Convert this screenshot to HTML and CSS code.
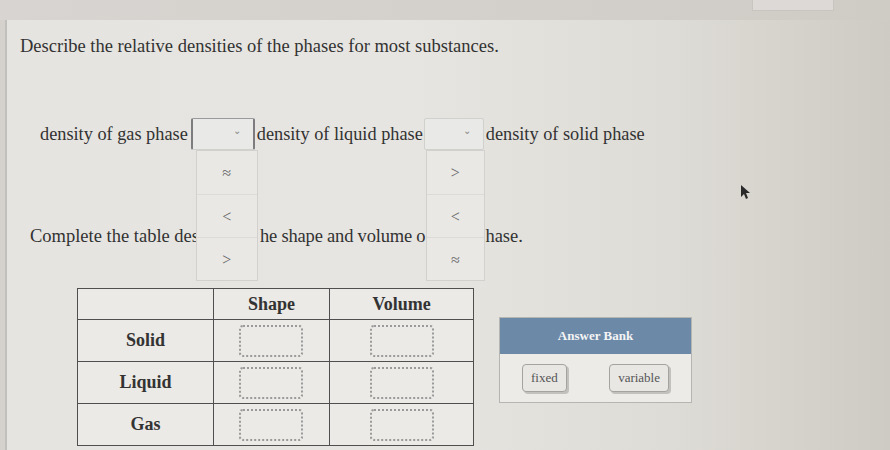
FILE: index.html
```html
<!DOCTYPE html>
<html>
<head>
<meta charset="utf-8">
<link rel="stylesheet" href="styles.css">
</head>
<body>
<div class="topbar"><div class="toptab"></div></div>
<div class="panel">
  <p class="title">Describe the relative densities of the phases for most substances.</p>
  <div class="row1">
    <span>density of gas phase</span>
    <div class="select sel1 focused">
      <span class="caret">&#8964;</span>
      <ul class="list list1">
        <li>&#8776;</li>
        <li>&lt;</li>
        <li>&gt;</li>
      </ul>
    </div>
    <span>density of liquid phase</span>
    <div class="select sel2">
      <span class="caret">&#8964;</span>
      <ul class="list list2">
        <li>&gt;</li>
        <li>&lt;</li>
        <li>&#8776;</li>
      </ul>
    </div>
    <span>density of solid phase</span>
  </div>
  <p class="row2">Complete the table des<span class="hid hid1">cribing t</span><span class="mid">he shape and volume o</span><span class="hid hid2">f each p</span>hase.</p>
  <div class="lower">
    <table class="grid">
      <tr class="head"><th class="c1"></th><th class="c2">Shape</th><th class="c3">Volume</th></tr>
      <tr><th>Solid</th><td><div class="drop"></div></td><td><div class="drop"></div></td></tr>
      <tr><th>Liquid</th><td><div class="drop"></div></td><td><div class="drop"></div></td></tr>
      <tr><th>Gas</th><td><div class="drop"></div></td><td><div class="drop"></div></td></tr>
    </table>
    <div class="bank">
      <div class="bank-head">Answer Bank</div>
      <div class="bank-body">
        <span class="chip">fixed</span>
        <span class="chip">variable</span>
      </div>
    </div>
  </div>
  <svg class="cursor" width="10" height="16" viewBox="0 0 10 16"><path d="M1 1 L1 13 L4 10 L6 15 L8 14 L6 9 L10 9 Z" fill="#2a2a2a"/></svg>
</div>
</body>
</html>
```
FILE: styles.css
```css
html, body {
  margin: 0;
  padding: 0;
}
body {
  width: 890px;
  height: 450px;
  overflow: hidden;
  background: #d5d2ce;
  font-family: "Liberation Serif", "Times New Roman", serif;
  color: #323232;
}
.topbar {
  height: 20px;
  background: linear-gradient(90deg, #d8d4d1, #d3d0cb 60%, #cfccc6);
  position: relative;
}
.toptab {
  position: absolute;
  left: 752px;
  top: 0;
  width: 80px;
  height: 10px;
  border: 1px solid #c8c4c0;
  border-top: none;
  background: #dcd9d6;
}
.panel {
  position: relative;
  margin-left: 5px;
  height: 430px;
  border-left: 2px solid #c2c0bc;
  background: linear-gradient(90deg, #e6e4e1 0%, #e7e5e1 45%, #dedcd6 75%, #cdcbc3 100%);
  padding-left: 13px;
  box-sizing: border-box;
  padding-top: 16px;
}
.title {
  margin: 0;
  font-size: 18.5px;
  line-height: 20px;
}
.row1 {
  display: flex;
  align-items: center;
  height: 32px;
  margin-top: 62px;
  padding-left: 20px;
  font-size: 18.3px;
}
.select {
  position: relative;
  height: 32px;
  box-sizing: border-box;
  background: #e9e9e7;
  border: 1px solid #d0d0cd;
  border-radius: 2px;
  margin: 0 2px;
}
.sel1 {
  width: 64px;
  margin-left: 3px;
}
.sel2 {
  width: 60px;
  margin-left: 1px;
}
.select.focused {
  border-left: 2px solid #7d7d80;
  border-right: 2px solid #7d7d80;
  border-top: 1px solid #9a9a9c;
}
.caret {
  position: absolute;
  right: 12px;
  top: 6px;
  font-size: 10px;
  color: #888;
}
.list {
  position: absolute;
  top: 31px;
  margin: 0;
  padding: 0;
  list-style: none;
  background: #e9e8e5;
  border: 1px solid #d2d1ce;
  box-sizing: border-box;
  z-index: 2;
}
.list1 {
  left: 3px;
  width: 62px;
}
.list2 {
  left: 1px;
  width: 59px;
}
.list li {
  height: 43px;
  line-height: 43px;
  text-align: center;
  font-size: 16px;
  color: #666;
  border-top: 1px solid #dcdbd8;
  box-sizing: border-box;
}
.list li:first-child {
  border-top: none;
}
.row2 {
  margin: 76px 0 0 10px;
  font-size: 18.5px;
  line-height: 20px;
  white-space: nowrap;
}
.mid {
  letter-spacing: -0.2px;
}
.hid {
  display: inline-block;
  overflow: hidden;
  white-space: nowrap;
  vertical-align: bottom;
  color: transparent;
}
.hid1 {
  width: 61px;
}
.hid2 {
  width: 60px;
}
.lower {
  display: flex;
  align-items: flex-start;
  margin-top: 42px;
  margin-left: 57px;
}
.grid {
  border-collapse: collapse;
  width: 397px;
  background: #ebeae6;
}
.grid th, .grid td {
  border: 1.5px solid #4f4f4f;
  padding: 0;
  text-align: center;
  font-weight: bold;
  font-size: 18px;
  color: #333;
}
.grid tr {
  height: 42px;
}
.grid tr.head {
  height: 31px;
}
.c1 { width: 136px; }
.c2 { width: 116px; }
.c3 { width: 144px; }
.drop {
  width: 64px;
  height: 32px;
  margin: 0 auto;
  border: 2px dotted #9a9a9a;
  border-radius: 4px;
  box-sizing: border-box;
}
.bank {
  width: 191px;
  margin-top: 29px;
  margin-left: 25px;
  border: 1px solid #b5b5b2;
  background: #ecebe8;
}
.bank-head {
  height: 36px;
  line-height: 36px;
  background: #6d89a8;
  color: #f4f4f4;
  text-align: center;
  font-size: 13px;
  font-weight: bold;
}
.bank-body {
  height: 48px;
  display: flex;
  justify-content: space-between;
  align-items: center;
  padding: 0 22px;
}
.chip {
  display: inline-block;
  height: 26px;
  line-height: 26px;
  padding: 0 8px;
  border: 1px solid #a3a3a0;
  border-radius: 4px;
  background: #e8e7e4;
  box-shadow: 2px 2px 0 #c2c1bd;
  font-size: 13px;
  color: #555;
}
.cursor {
  position: absolute;
  left: 733px;
  top: 164px;
}
```
